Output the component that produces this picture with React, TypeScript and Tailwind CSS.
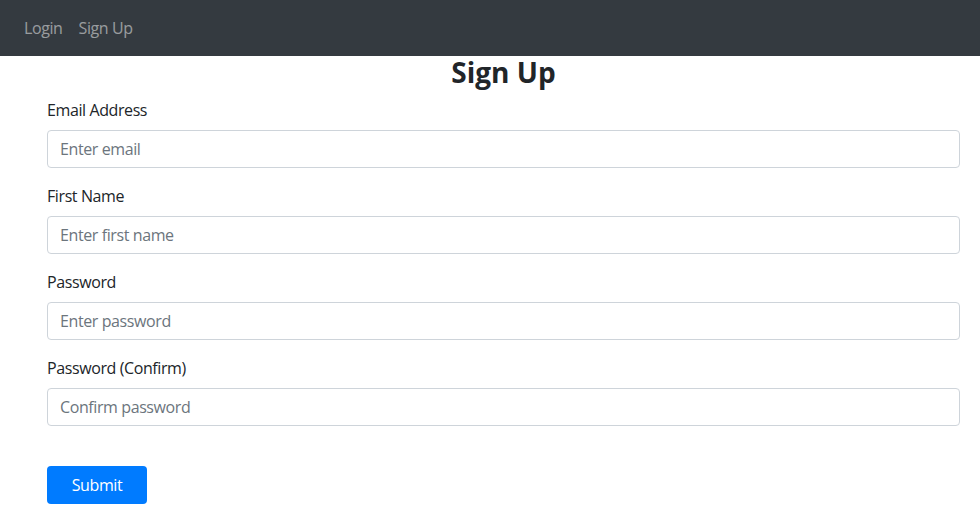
const font = { fontFamily: '"Segoe UI", "Open Sans", "Noto Sans", sans-serif' };

const fields = [
  { label: "Email Address", type: "email", placeholder: "Enter email" },
  { label: "First Name", type: "text", placeholder: "Enter first name" },
  { label: "Password", type: "password", placeholder: "Enter password" },
  { label: "Password (Confirm)", type: "password", placeholder: "Confirm password" },
];

export default function App() {
  return (
    <div className="min-h-[522px] bg-white text-[#212529] tracking-[-0.4px]" style={font}>
      {/* Navbar */}
      <nav className="h-14 bg-[#343a40] px-4 py-2 flex items-center">
        <a className="px-2 py-2 text-base leading-6 text-white/50" href="#">
          Login
        </a>
        <a className="px-2 py-2 text-base leading-6 text-white/50" href="#">
          Sign Up
        </a>
      </nav>

      {/* Form */}
      <form className="pl-[47px] pr-5">
        <h3 className="text-[28px] leading-[1.2] font-bold text-center mb-2 tracking-normal">
          Sign Up
        </h3>
        {fields.map((f) => (
          <div key={f.label} className="mb-4">
            <label className="block text-base leading-6 mb-2">{f.label}</label>
            <input
              type={f.type}
              placeholder={f.placeholder}
              className="block w-full h-[38px] px-3 py-1.5 text-base leading-6 tracking-[-0.4px] border border-[#ced4da] rounded placeholder:text-[#6c757d] outline-none"
              style={font}
            />
          </div>
        ))}
        <div className="h-6" />
        <button
          type="button"
          className="w-[100px] h-[38px] bg-[#007bff] text-white text-base leading-6 tracking-[-0.4px] rounded"
          style={font}
        >
          Submit
        </button>
      </form>
    </div>
  );
}
